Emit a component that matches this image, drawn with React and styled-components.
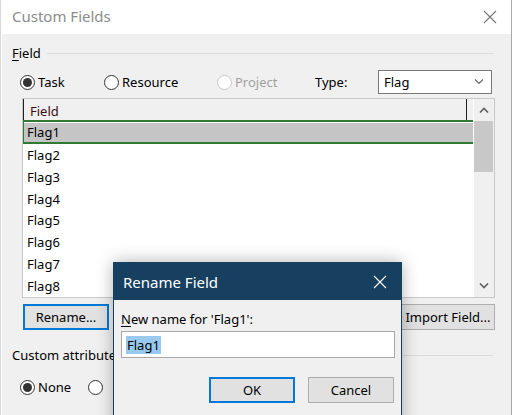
import React from 'react'
import styled, { createGlobalStyle } from 'styled-components'

const GlobalStyle = createGlobalStyle`
  html, body { margin: 0; padding: 0; background: #ffffff; }
  body {
    font-family: "Noto Sans", "Open Sans", sans-serif;
    font-size: 13px;
    color: #000;
    overflow: hidden;
  }
`

const Page = styled.div`
  width: 513px;
  height: 415px;
  overflow: hidden;
  position: relative;
  background: #fff;
  border-left: 1px solid #d8d8d8;
  box-sizing: border-box;
`

const Window = styled.div`
  margin-left: 1px;
  width: 509px;
  height: 415px;
  background: #f0f0f0;
  border-right: 1px solid #a8a8a8;
  display: flex;
  flex-direction: column;
`

const TitleBar = styled.div`
  height: 34px;
  background: #fff;
  display: flex;
  align-items: center;
  justify-content: space-between;
  padding: 0 14px 0 10px;
  flex-shrink: 0;
`

const Title = styled.span`
  font-size: 15px;
  color: #8c8c8c;
  margin-top: -2px;
`

const Body = styled.div`
  padding: 9px 18px 0 10px;
  display: flex;
  flex-direction: column;
`

const GroupLabel = styled.div`
  display: flex;
  align-items: center;
  gap: 6px;
  height: 20px;
  &::after {
    content: '';
    flex: 1;
    height: 1px;
    background: #dcdcdc;
  }
`

const U = styled.span`
  text-decoration: underline;
  text-underline-offset: 2px;
`

const RadioRow = styled.div`
  display: flex;
  align-items: center;
  height: 28px;
  margin-top: 5px;
  padding-left: 8px;
`

const RadioItem = styled.label`
  display: flex;
  align-items: center;
  gap: 3px;
  width: ${p => p.$w}px;
  color: ${p => (p.$disabled ? '#a0a0a0' : '#000')};
`

const Circle = styled.span`
  width: 13px;
  height: 13px;
  border-radius: 50%;
  border: 1px solid ${p => (p.$disabled ? '#c8c8c8' : '#333')};
  background: #fff;
  display: flex;
  align-items: center;
  justify-content: center;
  &::after {
    content: '';
    width: 9px;
    height: 9px;
    border-radius: 50%;
    background: ${p => (p.$on ? '#333' : 'transparent')};
  }
`

const TypeLabel = styled.span`
  width: 63px;
`

const Select = styled.div`
  width: 114px;
  height: 24px;
  border: 1px solid #7a7a7a;
  background: #fff;
  display: flex;
  align-items: center;
  justify-content: space-between;
  padding: 0 7px 0 5px;
  box-sizing: border-box;
`

const List = styled.div`
  margin: 2px 0 0 10px;
  width: 473px;
  height: 200px;
  border: 1px solid #c8c8c8;
  box-sizing: border-box;
  display: flex;
  background: #fff;
`

const ListMain = styled.div`
  flex: 1;
  display: flex;
  flex-direction: column;
`

const HeaderRow = styled.div`
  height: 21px;
  display: flex;
  background: #f0f0f0;
`

const HeaderCell = styled.div`
  width: 444px;
  border-left: 1px solid #222;
  border-right: 1px solid #222;
  padding: 3px 0 0 6px;
  box-sizing: border-box;
  color: #3a0e0e;
`

const Row = styled.div`
  height: 22px;
  display: flex;
  align-items: center;
  padding-left: 4px;
  box-sizing: border-box;
  ${p =>
    p.$sel &&
    `
    height: 24px;
    padding-left: 3px;
    border-top: 2px solid #317a31;
    border-bottom: 2px solid #317a31;
    border-left: 1px solid #317a31;
    background: linear-gradient(#ffffff 0 1px, #c5c5c5 1px);
  `}
`

const ScrollBar = styled.div`
  width: 20px;
  background: #f0f0f0;
  display: flex;
  flex-direction: column;
  border-left: 1px solid #fff;
`

const Arrow = styled.div`
  height: 22px;
  display: flex;
  align-items: center;
  justify-content: center;
`

const Thumb = styled.div`
  height: 51px;
  background: #c8c8c8;
  margin: 0 1px 0 0;
`

const Track = styled.div`
  flex: 1;
`

const ButtonRow = styled.div`
  display: flex;
  justify-content: space-between;
  margin: 6px 0 0 11px;
  width: 472px;
`

const Button = styled.div`
  width: ${p => p.$w}px;
  height: 26px;
  box-sizing: border-box;
  background: #e1e1e1;
  border: ${p => (p.$focus ? '2px solid #0078d7' : '1px solid #adadad')};
  display: flex;
  align-items: center;
  justify-content: center;
`

const AttrLabel = styled(GroupLabel)`
  margin-top: 15px;
`

const SmallRow = styled(RadioRow)`
  margin-top: 8px;
`

const Modal = styled.div`
  position: absolute;
  left: 112px;
  top: 262px;
  width: 289px;
  height: 170px;
  background: #f0f0f0;
  border: 1px solid #173f5f;
  box-sizing: border-box;
  box-shadow: 0 0 16px rgba(0, 0, 0, 0.3);
  display: flex;
  flex-direction: column;
`

const ModalBar = styled.div`
  height: 37px;
  background: #173f5f;
  color: #fff;
  display: flex;
  align-items: center;
  justify-content: space-between;
  padding: 0 14px 0 9px;
  font-size: 15px;
`

const ModalBody = styled.div`
  padding: 10px 6px 0 7px;
  display: flex;
  flex-direction: column;
`

const Input = styled.div`
  margin-top: 3px;
  height: 27px;
  border: 1px solid #a8a8a8;
  background: #fff;
  display: flex;
  align-items: center;
  padding-left: 4px;
  box-sizing: border-box;
`

const Highlight = styled.span`
  background: #99c9ef;
  padding: 0 1px;
`

const ModalButtons = styled.div`
  display: flex;
  justify-content: flex-end;
  gap: 13px;
  margin-top: 19px;
  padding-right: 1px;
`

const CloseIcon = ({ color, size = 14 }) => (
  <svg width={size} height={size} viewBox="0 0 14 14">
    <path d="M1 1L13 13M13 1L1 13" stroke={color} strokeWidth="1.1" />
  </svg>
)

const Chevron = ({ up, color = '#555', w = 10, sw = 1.6 }) => (
  <svg width={w} height="6" viewBox="0 0 10 6">
    <path
      d={up ? 'M1 5.5L5 1.5L9 5.5' : 'M1 0.5L5 4.5L9 0.5'}
      stroke={color}
      strokeWidth={sw}
      fill="none"
    />
  </svg>
)

const flags = ['Flag1', 'Flag2', 'Flag3', 'Flag4', 'Flag5', 'Flag6', 'Flag7', 'Flag8']

const App = () => (
  <Page>
    <GlobalStyle />
    <Window>
      <TitleBar>
        <Title>Custom Fields</Title>
        <CloseIcon color="#777" />
      </TitleBar>
      <Body>
        <GroupLabel>
          <span>
            <U>F</U>ield
          </span>
        </GroupLabel>
        <RadioRow>
          <RadioItem $w={84}>
            <Circle $on />
            Task
          </RadioItem>
          <RadioItem $w={113}>
            <Circle />
            Resource
          </RadioItem>
          <RadioItem $w={98} $disabled>
            <Circle $disabled />
            Project
          </RadioItem>
          <TypeLabel>Type:</TypeLabel>
          <Select>
            <span>Flag</span>
            <Chevron color="#666" w={10} sw={1.1} />
          </Select>
        </RadioRow>
        <List>
          <ListMain>
            <HeaderRow>
              <HeaderCell>Field</HeaderCell>
            </HeaderRow>
            {flags.map((f, i) => (
              <Row key={f} $sel={i === 0}>
                {f}
              </Row>
            ))}
          </ListMain>
          <ScrollBar>
            <Arrow>
              <Chevron up color="#606060" />
            </Arrow>
            <Thumb />
            <Track />
            <Arrow>
              <Chevron color="#606060" />
            </Arrow>
          </ScrollBar>
        </List>
        <ButtonRow>
          <Button $w={86} $focus>
            Rename...
          </Button>
          <Button $w={94}>Import Field...</Button>
        </ButtonRow>
        <AttrLabel>
          <span>Custom attributes</span>
        </AttrLabel>
        <SmallRow>
          <RadioItem $w={68}>
            <Circle $on />
            None
          </RadioItem>
          <RadioItem $w={20}>
            <Circle />
          </RadioItem>
        </SmallRow>
      </Body>
    </Window>
    <Modal>
      <ModalBar>
        <span>Rename Field</span>
        <CloseIcon color="#fff" />
      </ModalBar>
      <ModalBody>
        <span>
          <U>N</U>ew name for 'Flag1':
        </span>
        <Input>
          <Highlight>Flag1</Highlight>
        </Input>
        <ModalButtons>
          <Button $w={86} $focus>
            OK
          </Button>
          <Button $w={86}>Cancel</Button>
        </ModalButtons>
      </ModalBody>
    </Modal>
  </Page>
)

export default App
